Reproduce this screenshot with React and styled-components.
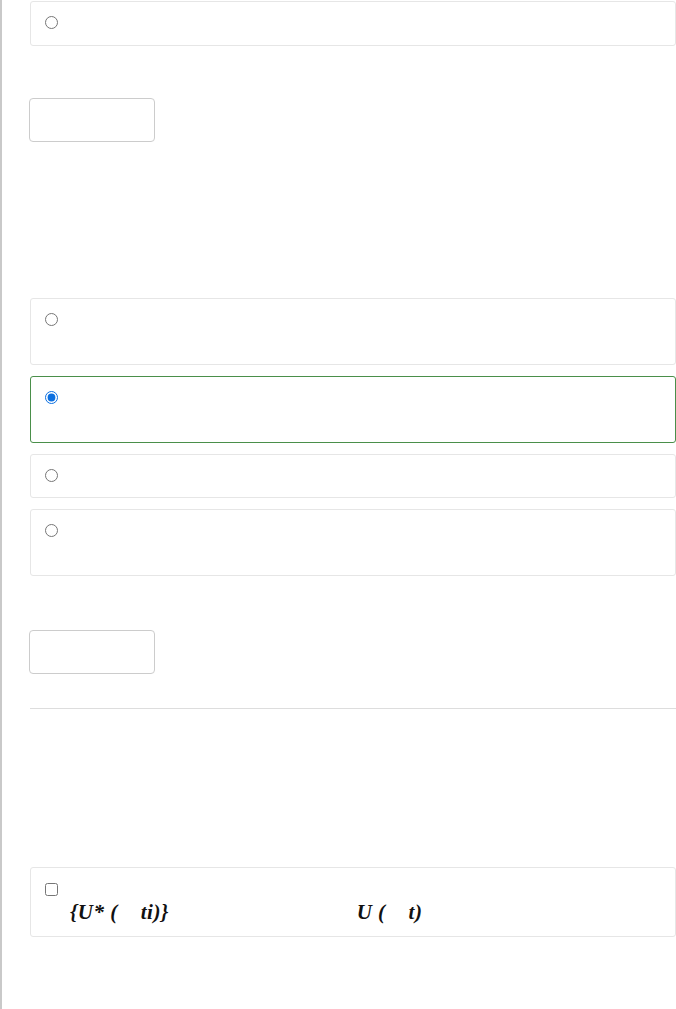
import React from 'react';
import styled, { createGlobalStyle } from 'styled-components';

const GlobalStyle = createGlobalStyle`
    html, body {
        margin: 0;
        padding: 0;
        background: #ffffff;
        font-family: "Liberation Sans", Arial, sans-serif;
    }
`;

const cardBorder = '#e6e6e6';
const correctGreen = '#4a8f4a';
const inputBorder = '#cccccc';

const options = [
    { rows: 2, checked: false },
    { rows: 2, checked: true },
    { rows: 1, checked: false },
    { rows: 2, checked: false },
];

export default function App() {
    return (
        <>
            <GlobalStyle />
            <Page>
                <Option rows={1} $gap={1}>
                    <Radio type="radio" name="q1" readOnly />
                </Option>

                <Answer $gap={52} />

                <Question $gap={156}>
                    {options.map((o, i) => (
                        <Option key={i} rows={o.rows} $correct={o.checked}>
                            <Radio type="radio" name="q2" checked={o.checked} readOnly />
                        </Option>
                    ))}
                </Question>

                <Answer $gap={54} />

                <Divider />

                <CheckOption $gap={158}>
                    <Check type="checkbox" readOnly />
                    <MathLine>
                        <MathText>{'{U* (    ti)}'}</MathText>
                        <MathText>{'U (    t)'}</MathText>
                    </MathLine>
                </CheckOption>
            </Page>
        </>
    );
}

const Page = styled.div`
    min-height: 100vh;
    box-sizing: border-box;
    border-left: 2px solid #c9c9c9;
    padding: 0 0 0 28px;
    display: flex;
    flex-direction: column;
    align-items: flex-start;
`;

const Question = styled.div`
    margin-top: ${p => p.$gap}px;
    width: 646px;
    display: flex;
    flex-direction: column;
    gap: 11px;
`;

const Option = styled.div`
    margin-top: ${p => p.$gap || 0}px;
    width: 646px;
    box-sizing: border-box;
    height: ${p => (p.rows === 2 ? 67 : p.$gap ? 45 : 44)}px;
    border: 1px solid ${p => (p.$correct ? correctGreen : cardBorder)};
    border-radius: 3px;
    padding: 14px 14px 0;
    display: flex;
    align-items: flex-start;
`;

const Radio = styled.input`
    margin: 0;
    width: 13px;
    height: 13px;
    accent-color: #0b6fe0;
`;

const Answer = styled.div`
    margin-top: ${p => p.$gap}px;
    margin-left: -1px;
    width: 126px;
    height: 44px;
    box-sizing: border-box;
    border: 1px solid ${inputBorder};
    border-radius: 4px;
`;

const Divider = styled.hr`
    margin: 34px 0 0;
    width: 646px;
    border: none;
    border-top: 1px solid #dddddd;
`;

const CheckOption = styled.div`
    margin-top: ${p => p.$gap}px;
    width: 646px;
    height: 70px;
    box-sizing: border-box;
    border: 1px solid ${cardBorder};
    border-radius: 3px;
    padding: 15px 14px 0;
    display: flex;
    flex-direction: column;
    align-items: flex-start;
`;

const Check = styled.input`
    margin: 0;
    width: 13px;
    height: 13px;
`;

const MathLine = styled.div`
    display: flex;
    margin-top: 5px;
    padding-left: 25px;
    gap: 188px;
`;

const MathText = styled.span`
    font-family: "Liberation Serif", "Times New Roman", serif;
    font-style: italic;
    font-weight: bold;
    font-size: 21px;
    line-height: 22px;
    white-space: pre;
    letter-spacing: 0.5px;
    color: #111;
`;
